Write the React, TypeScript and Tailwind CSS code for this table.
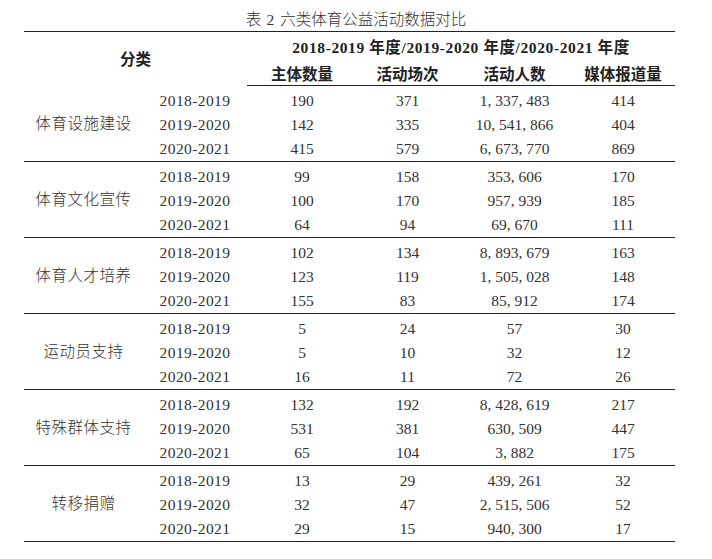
import React from "react";

const groups: { name: string; rows: [string, string, string, string, string][] }[] = [
  {
    name: "体育设施建设",
    rows: [
      ["2018-2019", "190", "371", "1, 337, 483", "414"],
      ["2019-2020", "142", "335", "10, 541, 866", "404"],
      ["2020-2021", "415", "579", "6, 673, 770", "869"],
    ],
  },
  {
    name: "体育文化宣传",
    rows: [
      ["2018-2019", "99", "158", "353, 606", "170"],
      ["2019-2020", "100", "170", "957, 939", "185"],
      ["2020-2021", "64", "94", "69, 670", "111"],
    ],
  },
  {
    name: "体育人才培养",
    rows: [
      ["2018-2019", "102", "134", "8, 893, 679", "163"],
      ["2019-2020", "123", "119", "1, 505, 028", "148"],
      ["2020-2021", "155", "83", "85, 912", "174"],
    ],
  },
  {
    name: "运动员支持",
    rows: [
      ["2018-2019", "5", "24", "57", "30"],
      ["2019-2020", "5", "10", "32", "12"],
      ["2020-2021", "16", "11", "72", "26"],
    ],
  },
  {
    name: "特殊群体支持",
    rows: [
      ["2018-2019", "132", "192", "8, 428, 619", "217"],
      ["2019-2020", "531", "381", "630, 509", "447"],
      ["2020-2021", "65", "104", "3, 882", "175"],
    ],
  },
  {
    name: "转移捐赠",
    rows: [
      ["2018-2019", "13", "29", "439, 261", "32"],
      ["2019-2020", "32", "47", "2, 515, 506", "52"],
      ["2020-2021", "29", "15", "940, 300", "17"],
    ],
  },
];

export default function App() {
  return (
    <div
      className="w-[712px] h-[559px] bg-white text-[#2a2a2a] text-[15.5px] leading-[20px]"
      style={{ fontFamily: '"Liberation Serif", "Noto Sans CJK SC", serif' }}
    >
      <div className="h-[31px] pt-[10px] flex justify-center text-[#333] font-light">
        <span>表</span>
        <span className="ml-[5px]">2</span>
        <span className="ml-[6px]">六类体育公益活动数据对比</span>
      </div>
      <div className="ml-[24px] w-[651px]">
        <div className="border-t-[1.5px] border-[#222]" />
        <div className="grid grid-cols-[223px_428px]">
          <div className="flex items-center justify-center font-bold text-[#222] pt-[2px]">分类</div>
          <div className="flex flex-col border-b-[1.5px] border-[#222]">
            <div className="h-[29px] flex items-center justify-center font-bold text-[#222] pt-[3px] tracking-[0.6px]">
              2018-2019 年度/2019-2020 年度/2020-2021 年度
            </div>
            <div className="h-[24px] pt-[3px] grid grid-cols-[110px_101px_113px_104px] items-center text-center font-bold text-[#222]">
              <div>主体数量</div>
              <div>活动场次</div>
              <div>活动人数</div>
              <div>媒体报道量</div>
            </div>
          </div>
        </div>
        {groups.map((g) => (
          <div key={g.name} className="flex border-b-[1.5px] border-[#222]">
            <div className="w-[119px] flex items-center justify-center text-[#333] font-light tracking-[0.5px]">{g.name}</div>
            <div className="flex-1 pt-[3px]">
              {g.rows.map((r) => (
                <div
                  key={r[0]}
                  className="h-[24px] grid grid-cols-[104px_110px_101px_113px_104px] items-center text-center text-[#333]"
                >
                  {r.map((c, i) => (
                    <div key={i} className={i === 0 ? "tracking-[0.4px]" : ""}>{c}</div>
                  ))}
                </div>
              ))}
            </div>
          </div>
        ))}
      </div>
    </div>
  );
}
